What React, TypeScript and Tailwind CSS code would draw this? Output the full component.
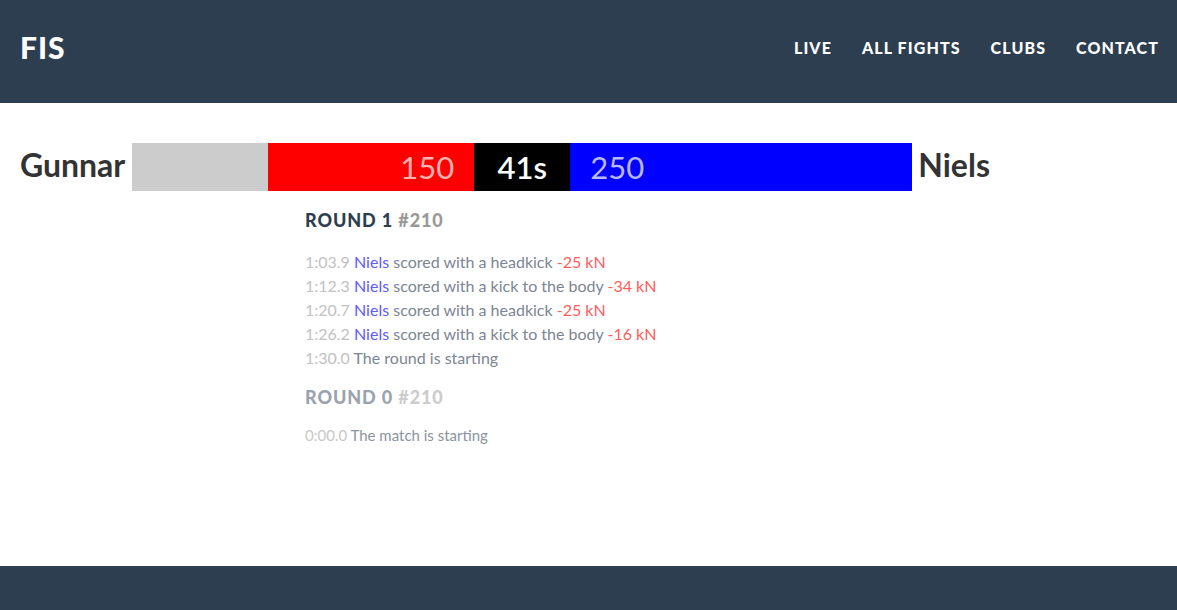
const events = [
  { time: "1:03.9", who: "Niels", text: "scored with a headkick", damage: "-25 kN" },
  { time: "1:12.3", who: "Niels", text: "scored with a kick to the body", damage: "-34 kN" },
  { time: "1:20.7", who: "Niels", text: "scored with a headkick", damage: "-25 kN" },
  { time: "1:26.2", who: "Niels", text: "scored with a kick to the body", damage: "-16 kN" },
  { time: "1:30.0", text: "The round is starting" },
];

export default function App() {
  return (
    <div className="flex min-h-[610px] flex-col bg-white font-['Lato','Liberation_Sans',sans-serif]">
      <header className="flex h-[103px] items-center justify-between bg-[#2d3e50] pb-2 pl-5 pr-[18px] text-white">
        <div className="text-[30px] font-black tracking-[1px]">FIS</div>
        <nav className="flex gap-[30px] text-[16px] font-black tracking-[1.1px]">
          <a>LIVE</a>
          <a>ALL FIGHTS</a>
          <a>CLUBS</a>
          <a>CONTACT</a>
        </nav>
      </header>

      <main className="flex-1 px-5 pt-10">
        <div className="flex items-center gap-[6px]">
          <span className="-mt-1 text-[32px] font-bold text-[#333]">Gunnar</span>
          <div className="ml-px flex h-12 w-[780px] text-[31px]">
            <div className="flex w-[342px] bg-[#cccccc]">
              <div className="ml-auto flex w-[206px] items-center justify-end bg-[#ff0000] pr-5 text-[#ffb3b3]">150</div>
            </div>
            <div className="flex w-24 items-center justify-center bg-black font-semibold text-white">41s</div>
            <div className="flex w-[342px] items-center bg-[#0000ff] pl-5 text-[#b8b8ff]">250</div>
          </div>
          <span className="-mt-1 text-[32px] font-bold text-[#333]">Niels</span>
        </div>

        <div className="ml-[285px] mt-[17px] text-[16px] leading-6">
          <h2 className="mb-[18px] text-[18px] font-black tracking-[0.9px] text-[#2d3e50]">
            ROUND 1 <span className="text-[#999999]">#210</span>
          </h2>
          {events.map((e) => (
            <div key={e.time} className="text-[#7b8594]">
              <span className="text-[#c2c2c2]">{e.time}</span>{" "}
              {e.who && <span className="text-[#5c5cff]">{e.who} </span>}
              {e.text}
              {e.damage && <span className="text-[#ff5c5c]"> {e.damage}</span>}
            </div>
          ))}

          <h2 className="mb-[14px] mt-[15px] text-[18px] font-black tracking-[0.9px] text-[#9aa3ad]">
            ROUND 0 <span className="text-[#cccccc]">#210</span>
          </h2>
          <div className="text-[15px] text-[#8a93a0]">
            <span className="text-[#c8c8c8]">0:00.0</span> The match is starting
          </div>
        </div>
      </main>

      <footer className="h-[44px] bg-[#2d3e50]" />
    </div>
  );
}
